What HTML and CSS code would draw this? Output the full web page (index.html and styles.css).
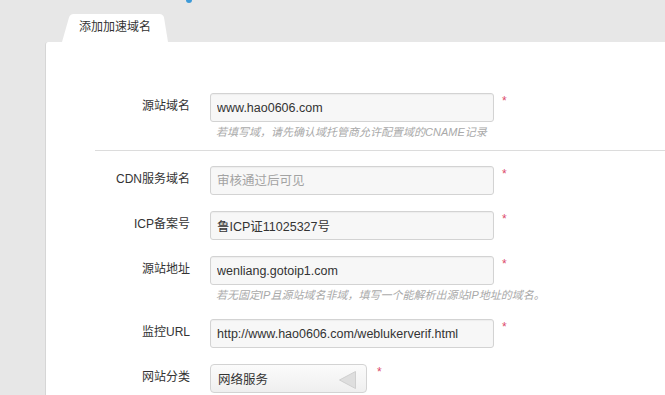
FILE: index.html
```html
<!DOCTYPE html>
<html lang="zh-CN">
<head>
  <meta charset="UTF-8" />
  <title>添加加速域名</title>
  <link rel="stylesheet" href="styles.css">
</head>
<body>
  <div class="topstrip">
    <span class="step-dot"></span>
  </div>

  <div class="tabs">
    <div class="tab">添加加速域名</div>
  </div>

  <div class="panel">
    <form class="domain-form">
      <div class="row row-first">
        <label class="lbl" for="srcDomain">源站域名</label>
        <div class="ctl">
          <input class="inp" type="text" id="srcDomain" value="www.hao0606.com" readonly />
          <div class="hint">若填写域，请先确认域托管商允许配置域的CNAME记录</div>
        </div>
        <span class="req">*</span>
      </div>

      <div class="divider"></div>

      <div class="row">
        <label class="lbl" for="cdnDomain">CDN服务域名</label>
        <div class="ctl">
          <input class="inp" type="text" id="cdnDomain" placeholder="审核通过后可见" readonly />
        </div>
        <span class="req">*</span>
      </div>

      <div class="row">
        <label class="lbl" for="icp">ICP备案号</label>
        <div class="ctl">
          <input class="inp" type="text" id="icp" value="鲁ICP证11025327号" readonly />
        </div>
        <span class="req">*</span>
      </div>

      <div class="row row-hint">
        <label class="lbl" for="srcAddr">源站地址</label>
        <div class="ctl">
          <input class="inp" type="text" id="srcAddr" value="wenliang.gotoip1.com" readonly />
          <div class="hint">若无固定IP且源站域名非域，填写一个能解析出源站IP地址的域名。</div>
        </div>
        <span class="req">*</span>
      </div>

      <div class="row">
        <label class="lbl" for="monUrl">监控URL</label>
        <div class="ctl">
          <input class="inp" type="text" id="monUrl" value="http://www.hao0606.com/weblukerverif.html" readonly />
        </div>
        <span class="req">*</span>
      </div>

      <div class="row">
        <label class="lbl">网站分类</label>
        <div class="ctl ctl-select">
          <div class="select">
            <span>网络服务</span>
            <svg class="select-arrow" width="19" height="20" viewBox="0 0 19 20">
              <path d="M1.5 10 L17.5 1.5 L17.5 18.5 Z" fill="#dedede" stroke="#cfcfcf" stroke-width="1"/>
            </svg>
          </div>
        </div>
        <span class="req req-select">*</span>
      </div>
    </form>
  </div>
</body>
</html>
```

FILE: styles.css
```css
html, body {
  overflow: hidden;
}

body {
  margin: 0;
  min-height: 100vh;
  display: flex;
  flex-direction: column;
  font-family: "Liberation Sans", "Noto Sans CJK SC", sans-serif;
  font-size: 12px;
  color: #333;
  background-color: #e7e7e7;
}

/* cut-off step indicator above the tab */
.topstrip {
  height: 14px;
  display: flex;
}

.step-dot {
  width: 6px;
  height: 6px;
  margin: -3px 0 0 186px;
  border-radius: 50%;
  background: #3d9ad8;
}

.tabs {
  display: flex;
  padding-left: 62px;
}

.tab {
  width: 106px;
  height: 28px;
  box-sizing: border-box;
  padding-top: 4px;
  background: #fff;
  text-align: center;
  line-height: 18px;
  color: #333;
  clip-path: path('M0 28 L7 3.5 Q8 0 11.5 0 L97.5 0 Q101 0 102 3.5 L106 28 Z');
}

.panel {
  flex: 1;
  margin-left: 45px;
  background: #fff;
  border-left: 1px solid #d6d6d6;
  border-top-left-radius: 3px;
  padding-top: 51px;
}

.row {
  display: flex;
  align-items: flex-start;
  margin-bottom: 16px;
}

.row-first {
  margin-bottom: 8px;
}

.row-hint {
  margin-bottom: 14px;
}

.lbl {
  width: 144px;
  flex-shrink: 0;
  margin-right: 20px;
  padding-top: 4px;
  text-align: right;
  line-height: 18px;
  color: #333;
}

.ctl {
  width: 284px;
  flex-shrink: 0;
  display: flex;
  flex-direction: column;
}

.ctl-select {
  width: 157px;
}

.inp {
  width: 284px;
  height: 29px;
  box-sizing: border-box;
  margin: 0;
  padding: 0 6px;
  border: 1px solid #d3d3d3;
  border-radius: 3px;
  background: #f7f7f7;
  box-shadow: inset 0 1px 1px rgba(0, 0, 0, 0.04);
  font-family: "Liberation Sans", "Noto Sans CJK SC", sans-serif;
  font-size: 12.5px;
  color: #333;
  outline: none;
}

.inp::placeholder {
  color: #a3a3a3;
}

.hint {
  padding-left: 6px;
  height: 20px;
  line-height: 20px;
  font-size: 11px;
  font-style: italic;
  color: #a9a9a9;
  white-space: nowrap;
}

.req {
  margin-left: 8px;
  padding-top: 2px;
  line-height: 12px;
  font-size: 12px;
  color: #dc4a6c;
}

.req-select {
  margin-left: 10px;
}

.divider {
  height: 1px;
  margin: 0 0 15px 49px;
  background: #dcdcdc;
}

.select {
  width: 157px;
  height: 29px;
  box-sizing: border-box;
  display: flex;
  align-items: center;
  justify-content: space-between;
  padding: 0 9px 0 7px;
  border: 1px solid #d3d3d3;
  border-radius: 4px;
  background: linear-gradient(#fbfbfb, #efefef);
  font-size: 12.5px;
  color: #333;
}

.select-arrow {
  margin-top: 2px;
}
```
